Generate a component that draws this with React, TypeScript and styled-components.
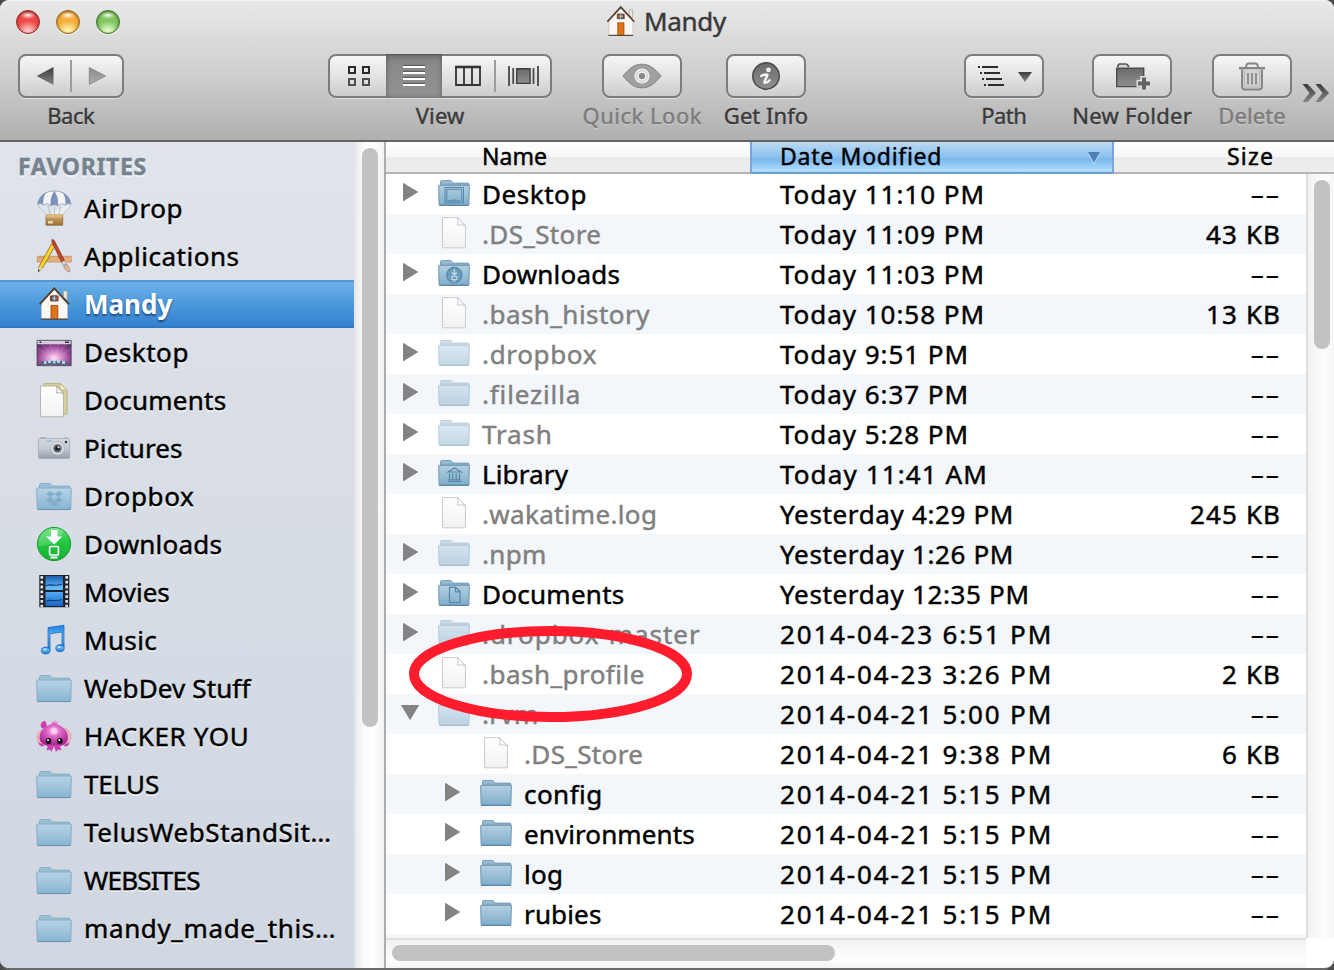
import React from 'react';
import styled, { createGlobalStyle, css } from 'styled-components';

const GlobalStyle = createGlobalStyle`
  * { box-sizing: border-box; }
  body {
    margin: 0;
    background: #4b4a4c;
    font-family: "Noto Sans", "Open Sans", sans-serif;
    color: #000;
    overflow: hidden;
  }
  svg { display: block; flex: none; }
`;

/* ---------- window ---------- */

const Window = styled.div`
  position: relative;
  display: flex;
  flex-direction: column;
  width: 1334px;
  height: 970px;
  border-radius: 9px 9px 10px 10px;
  border-bottom: 2px solid #6b696b;
  overflow: hidden;
  background: #fff;
`;

const Text = styled.span<{ $track?: number }>`
  letter-spacing: ${(p) => p.$track ?? 0}px;
  margin-right: ${(p) => -(p.$track ?? 0)}px;
  white-space: pre;
  -webkit-text-stroke: 0.45px currentColor;
`;

/* ---------- toolbar ---------- */

const Header = styled.header`
  flex: none;
  height: 142px;
  border-top: 1px solid #f4f4f4;
  border-bottom: 2px solid #656264;
  background: linear-gradient(#e8e8e8, #cfcfcf 52%, #b0b0b0);
`;

const TitleBar = styled.div`
  display: grid;
  grid-template-columns: 604px auto 1fr;
  align-items: center;
  height: 43px;
`;

const Lights = styled.div`
  display: flex;
  gap: 16px;
  padding: 0 0 1px 16px;
`;

const Light = styled.span<{ $edge: string; $mid: string; $glow: string }>`
  width: 24px;
  height: 24px;
  border-radius: 50%;
  border: 1.5px solid ${(p) => p.$edge};
  background:
    radial-gradient(ellipse 8px 4px at 50% 18%, rgba(255, 255, 255, 0.95), rgba(255, 255, 255, 0) 100%),
    radial-gradient(ellipse 12px 11px at 50% 95%, ${(p) => p.$glow} 20%, transparent 100%),
    ${(p) => p.$mid};
  box-shadow: inset 0 1px 3px ${(p) => p.$edge}, 0 1px 0 rgba(255, 255, 255, 0.5);
`;

const Title = styled.h1`
  display: flex;
  align-items: center;
  gap: 7px;
  margin: 0;
  padding-bottom: 2px;
  font-size: 26px;
  font-weight: 400;
  line-height: 41px;
  color: #383838;
  text-shadow: 0 1px 0 rgba(255, 255, 255, 0.6);
`;

const Tools = styled.div`
  display: flex;
  align-items: flex-start;
  padding: 10px 0 0 18px;
`;

const Tool = styled.div<{ $width: number; $gap: number; $disabled?: boolean }>`
  display: flex;
  flex: none;
  flex-direction: column;
  align-items: center;
  width: ${(p) => p.$width}px;
  margin-right: ${(p) => p.$gap}px;
  font-size: 22px;
  line-height: 35px;
  color: ${(p) => (p.$disabled ? '#7c7c7c' : '#3a3a3a')};
  text-shadow: 0 1px 0 rgba(255, 255, 255, 0.5);
`;

const ButtonFrame = styled.div`
  display: flex;
  width: 100%;
  height: 44px;
  border: 2px solid #7d7d7d;
  border-radius: 8px;
  background: linear-gradient(#f6f6f6, #e3e3e3 50%, #cdcdcd);
  box-shadow: 0 1px 0 rgba(255, 255, 255, 0.45);
`;

const Segment = styled.div<{ $width?: number; $active?: boolean }>`
  display: flex;
  flex: ${(p) => (p.$width ? `0 0 ${p.$width}px` : '1')};
  align-items: center;
  justify-content: center;
  ${(p) =>
    p.$active &&
    css`
      margin: -2px 0;
      background: linear-gradient(#787878, #888 20%, #939393);
      box-shadow: inset 0 0 5px rgba(0, 0, 0, 0.35), inset 0 1px 0 #666;
    `}
`;

const Divider = styled.i`
  flex: none;
  width: 2px;
  margin: 4px 0;
  background: #9c9c9c;
`;

const More = styled.div`
  padding-top: 29px;
`;

/* ---------- body ---------- */

const Body = styled.div`
  display: flex;
  flex: 1;
  min-height: 0;
`;

const Sidebar = styled.nav`
  flex: none;
  width: 356px;
  border-right: 2px solid #e3e5ea;
  background: linear-gradient(#e0e4eb, #d9dee6 35%, #d0d7e1);
`;

const SidebarHeading = styled.h2`
  margin: 0;
  padding: 4px 0 0 18px;
  height: 42px;
  font-size: 23px;
  font-weight: 700;
  line-height: 40px;
  color: #76838f;
  text-shadow: 0 2px 0 rgba(255, 255, 255, 0.65);
`;

const SidebarItem = styled.div<{ $selected?: boolean }>`
  display: flex;
  align-items: center;
  gap: 12px;
  height: 48px;
  padding-left: 36px;
  font-size: 26px;
  line-height: 48px;
  text-shadow: 0 2px 0 rgba(255, 255, 255, 0.6);
  ${(p) =>
    p.$selected &&
    css`
      background: linear-gradient(#5497d2 2px, #6cb2e7 2px, #4c98db 50%, #3380cf);
      box-shadow: inset 0 -2px 0 #2f79c6;
      color: #fff;
      font-weight: 700;
      line-height: 47px;
      text-shadow: 0 2px 2px rgba(20, 50, 100, 0.7);
      ${Text} {
        -webkit-text-stroke: 0;
      }
    `}
`;

const SidebarScroll = styled.div`
  flex: none;
  display: flex;
  justify-content: center;
  width: 30px;
  padding-top: 6px;
  border-right: 2px solid #adadad;
  background: linear-gradient(90deg, #ececec, #fbfbfb 30%, #fff 60%, #f3f3f3);
`;

const Thumb = styled.div<{ $w: number; $h: number }>`
  flex: none;
  width: ${(p) => p.$w}px;
  height: ${(p) => p.$h}px;
  border-radius: 8px;
  background: #c2c2c2;
`;

const List = styled.main`
  display: flex;
  flex: 1;
  flex-direction: column;
  min-width: 0;
`;

const ColumnHeads = styled.div`
  display: grid;
  grid-template-columns: 364px 364px 1fr;
  flex: none;
  height: 32px;
  border-bottom: 2px solid #b4b4b4;
  background: linear-gradient(#fff, #f8f8f8 48%, #ebebeb 52%, #ededed);
  font-size: 23px;
  line-height: 28px;
`;

const Head = styled.div<{ $kind: 'name' | 'date' | 'size' }>`
  display: flex;
  align-items: flex-start;
  ${(p) => p.$kind === 'name' && css`padding-left: 96px;`}
  ${(p) =>
    p.$kind === 'date' &&
    css`
      justify-content: space-between;
      height: 32px;
      padding: 0 11px 0 28px;
      border: solid #7ba3dc;
      border-width: 0 2px;
      background: linear-gradient(#bcdaf2, #8dc1ef 46%, #7ab7ee 54%, #b5e1fb 92%, #6a9cce 93%);
    `}
  ${(p) => p.$kind === 'size' && css`justify-content: flex-end; padding-right: 61px;`}
`;

const SortMark = styled.svg`
  margin-top: 9px;
`;

const ListBody = styled.div`
  display: flex;
  flex: 1;
  min-height: 0;
`;

const Rows = styled.div`
  flex: 1;
  height: 764px;
  overflow: hidden;
  background: #f3f6fa;
`;

const Row = styled.div<{ $striped: boolean }>`
  display: grid;
  grid-template-columns: 394px 1fr 140px;
  height: 40px;
  background: ${(p) => (p.$striped ? '#f3f6fa' : '#fff')};
  font-size: 26px;
  line-height: 40px;
`;

const NameCell = styled.div<{ $nested?: boolean; $hidden?: boolean }>`
  display: grid;
  grid-template-columns: 37px 44px 1fr;
  align-items: start;
  padding-left: ${(p) => (p.$nested ? 57 : 15)}px;
  color: ${(p) => (p.$hidden ? '#808080' : '#000')};
`;

const IconSlot = styled.div`
  height: 40px;
`;

const SizeCell = styled.div`
  display: flex;
  justify-content: flex-end;
  padding-right: 26px;
`;

const Dashes = styled.span`
  display: inline-block;
  letter-spacing: -0.1px;
  transform: scaleX(1.8);
  transform-origin: right center;
`;

const RightScroll = styled.div`
  flex: none;
  display: flex;
  justify-content: center;
  width: 28px;
  height: 764px;
  padding: 6px 0 0 2px;
  border-left: 2px solid #dedede;
  background: linear-gradient(90deg, #f1f1f1, #fdfdfd 60%, #f6f6f6);
`;

const BottomScroll = styled.div`
  flex: none;
  display: flex;
  width: 920px;
  height: 30px;
  padding: 5px 0 0 6px;
  border-top: 2px solid #dfdfdf;
  background: linear-gradient(#f2f2f2, #fdfdfd 70%, #f4f4f4);
`;

const Highlight = styled.svg`
  position: absolute;
  left: 408px;
  top: 625px;
`;

/* ---------- shared gradients ---------- */

const stops = (list: [number, string][]) =>
  list.map(([o, c]) => <stop key={o} offset={o} stopColor={c} />);

const Vertical = ({ id, list }: { id: string; list: [number, string][] }) => (
  <linearGradient id={id} x1="0" y1="0" x2="0" y2="1">{stops(list)}</linearGradient>
);

const Gradients = () => (
  <svg width="0" height="0">
    <defs>
      <Vertical id="folder" list={[[0, '#b4d0e2'], [1, '#7dadcb']]} />
      <Vertical id="folderBack" list={[[0, '#a3c4d9'], [1, '#6f9fbe']]} />
      <Vertical id="sideFolder" list={[[0, '#b9d3e4'], [1, '#86b4d3']]} />
      <Vertical id="paper" list={[[0, '#ffffff'], [1, '#f2f2f2']]} />
      <Vertical id="dark" list={[[0, '#3c3c3c'], [1, '#858585']]} />
      <Vertical id="mid" list={[[0, '#8a8a8a'], [1, '#aeaeae']]} />
      <Vertical id="info" list={[[0, '#6b6b6b'], [1, '#8f8f8f']]} />
      <Vertical id="camera" list={[[0, '#d5dae0'], [0.5, '#c3cad2'], [1, '#939ca8']]} />
      <Vertical id="green" list={[[0, '#5fdd72'], [0.5, '#1fc53d'], [1, '#17b235']]} />
      <Vertical id="music" list={[[0, '#1b7fe0'], [0.4, '#5cb4f6'], [1, '#2477d8']]} />
      <Vertical id="film" list={[[0, '#1e5cae'], [0.4, '#65bdff'], [1, '#1767c4']]} />
      <Vertical id="box" list={[[0, '#d5ab6e'], [1, '#9e733c']]} />
      <radialGradient id="aurora" cx="0.5" cy="0.7" r="0.8">
        {stops([[0, '#fdeefa'], [0.25, '#dd95ce'], [0.6, '#8f4590'], [1, '#33244c']])}
      </radialGradient>
      <radialGradient id="squid" cx="0.5" cy="0.35" r="0.6">
        {stops([[0, '#fbc3ee'], [0.4, '#de66c6'], [1, '#a82897']])}
      </radialGradient>
    </defs>
  </svg>
);

/* ---------- toolbar icons ---------- */

const House = ({ size = 36 }: { size?: number }) => (
  <svg width={size} height={size} viewBox="0 0 36 36">
    <path d="M27.5 5h3.6v9l-3.6-3z" fill="#efe9df" stroke="#a89f92" strokeWidth=".7" />
    <path d="M5.5 17 18.3 3 31.5 17v15.8h-26z" fill="#fbf8f3" stroke="#c9c0b3" strokeWidth=".7" />
    <path d="M3.6 18.3 18.3 2.3 33 18.3" fill="none" stroke="#54402f" strokeWidth="1.9" />
    <path d="M4.8 33.2h27" stroke="#574a3f" strokeWidth="1.3" />
    <path d="M14 9.6h2v5.6h-2zM20.6 9.6h2v5.6h-2z" fill="#a03a22" />
    <path d="M16 9.6h4.6v5.6H16z" fill="#5b6774" stroke="#483c34" strokeWidth=".6" />
    <path d="M18.3 9.6v5.6M16 12.3h4.6" stroke="#dfe4e8" strokeWidth=".7" />
    <path d="M15 19.4h6.8v13.2H15z" fill="#e07318" stroke="#8c4512" strokeWidth=".8" />
  </svg>
);

const BackIcon = () => (
  <svg width="18" height="20" viewBox="0 0 18 20"><path d="M.6 10 17.5 1v18z" fill="url(#dark)" /></svg>
);
const ForwardIcon = () => (
  <svg width="18" height="20" viewBox="0 0 18 20"><path d="M17.4 10 1.3 1.6v16.8z" fill="url(#mid)" stroke="#858585" strokeWidth=".9" /></svg>
);
const GridIcon = () => (
  <svg width="24" height="22" viewBox="0 0 24 22" fill="none" strokeWidth="2">
    <path d="M3 2h6v6H3zM17 2h6v6h-6z" stroke="#2c2c2c" />
    <path d="M3 14h6v6H3zM17 14h6v6h-6z" stroke="#4e4e4e" />
  </svg>
);
const ListIcon = () => (
  <svg width="22" height="24" viewBox="0 0 22 24">
    <path d="M0 1.8h22M0 7.8h22M0 13.8h22M0 19.8h22" stroke="#5f5f5f" strokeWidth="2" />
    <path d="M0 3h22M0 9h22M0 15h22M0 21h22" stroke="#fff" strokeWidth="2" />
  </svg>
);
const ColumnsIcon = () => (
  <svg width="26" height="22" viewBox="0 0 26 22" fill="none" stroke="#333">
    <path d="M1 1.5v18.5h24V1.5M9 2v17M17 2v17" strokeWidth="1.8" />
    <path d="M0 2h26" strokeWidth="2.6" />
  </svg>
);
const FlowIcon = () => (
  <svg width="31" height="22" viewBox="0 0 31 22">
    <path d="M1 1v20M30 1v20" stroke="#4a4a4a" strokeWidth="1.8" />
    <path d="M5.2 3v16M25.500 3v16" stroke="#4a4a4a" strokeWidth="1.8" />
    <path d="M8.700 3.800h13.400v14.600H8.700z" fill="url(#info)" stroke="#3e3e3e" strokeWidth="1.4" />
  </svg>
);
const EyeIcon = () => (
  <svg width="40" height="26" viewBox="0 0 40 26">
    <path d="M1 13C8 4.600 13 1.200 20 1.200S32 4.600 39 13C32 21.400 27 24.800 20 24.800S8 21.400 1 13z" fill="#9f9f9f" stroke="#808080" />
    <circle cx="20" cy="13" r="7.600" fill="#ececec" />
    <circle cx="20" cy="13" r="5.400" fill="none" stroke="#c9c9c9" strokeWidth="1" />
    <circle cx="20" cy="13" r="3.100" fill="#868686" />
  </svg>
);
const InfoIcon = () => (
  <svg width="28" height="28" viewBox="0 0 28 28">
    <circle cx="14" cy="14" r="13.200" fill="url(#info)" stroke="#484848" strokeWidth="1.500" />
    <circle cx="16.500" cy="7.800" r="2.400" fill="#f2f2f2" />
    <path d="M9.300 14c2.200-1.400 4.300-1.800 6.200-1.400-.5 2.400-3.300 5.500-3 8 1.800.7 3.600-.5 5-2.300" fill="none" stroke="#f2f2f2" strokeWidth="2.500" strokeLinejoin="round" strokeLinecap="round" />
  </svg>
);
const PathIcon = () => (
  <svg width="56" height="24" viewBox="0 0 56 24">
    <g stroke="#2c2c2c" strokeWidth="2">
      <path d="M2 3h2M6 3h16M4 9h2M8 9h16M6 15h2M10 15h16M8 21h2M12 21h16" />
    </g>
    <path d="M42 8h14l-7 10z" fill="url(#dark)" />
  </svg>
);
const NewFolderIcon = () => (
  <svg width="36" height="28" viewBox="0 0 36 28">
    <path d="M4 5V3.800C4 2.500 5 2 6 2h5.500c1.400 0 2.300.7 2.800 1.800L14.700 5" fill="#d7d7d7" stroke="#555" strokeWidth="1.700" />
    <path d="M2.700 6.200h27v18.400h-27z" fill="url(#info)" stroke="#4c4c4c" strokeWidth="1.400" />
    <path d="M30 14v14M22.500 21.500H36" stroke="#dedede" strokeWidth="7.500" />
    <path d="M30 15.500v12M24 21.500h12" stroke="#626262" strokeWidth="4" />
  </svg>
);
const TrashIcon = () => (
  <svg width="26" height="29" viewBox="0 0 26 29" fill="none" stroke="#858585">
    <path d="M7 5.500C7 3 8 1.500 10 1.500h6c2 0 3 1.500 3 4" strokeWidth="1.900" />
    <path d="M0 6.200h26" strokeWidth="2.400" />
    <path d="M3 7.500v17c0 2 1 3 3 3h14c2 0 3-1 3-3v-17" strokeWidth="1.900" fill="#d3d3d3" />
    <path d="M5.300 8v15c0 1.500.6 2 2 2h11.400c1.400 0 2-.5 2-2V8" stroke="#b5b5b5" strokeWidth="1" />
    <path d="M9 11v11.500M13 11v11.500M17 11v11.500" strokeWidth="1.700" />
  </svg>
);
const MoreIcon = () => (
  <svg width="28" height="20" viewBox="0 0 28 20">
    <path d="M.5 1H5.500l8.500 9-8.500 9H.5l7-9zM13.500 1h5l8.500 9-8.500 9h-5l7-9z" fill="url(#dark)" />
  </svg>
);

/* ---------- file icons ---------- */

type Badge = 'desktop' | 'downloads' | 'library' | 'documents' | undefined;

const badges: Record<string, React.ReactNode> = {
  desktop: <path d="M7 7.500h18.500v15.300H7zM8.800 9.300h14.900v11.700H8.800zM12 21.500l1-1.400h6.500l1 1.400" strokeWidth="1" />,
  downloads: (
    <>
      <circle cx="16.300" cy="15" r="7.600" fill="#6d9cbb" />
      <path d="M16.300 9v5.500M13.800 12.500l2.500 2.500 2.500-2.500" stroke="#b9d6e8" strokeWidth="1.600" />
      <path d="M13.800 16.500h5v3h-5zM14.800 21.200h3" stroke="#b9d6e8" />
    </>
  ),
  library: <path d="M10 12h13l-6.500-4zM11.500 13.500v6M14.800 13.500v6M18.200 13.500v6M21.500 13.500v6M9.500 21.500h14M10.500 19.800h12" />,
  documents: <path d="M11.500 7.300h6.300l4.200 4.300v10.900H11.500zM17.500 7.500v4.300h4.300" />,
};

const Folder = ({ badge, faded }: { badge?: Badge; faded?: boolean }) => (
  <svg width="32" height="38" viewBox="0 -6 32 38" opacity={faded ? 0.48 : 1}>
    <path d="M2.500 4.500V1.700C2.500.9 3 .5 3.700.5h8.600c.8 0 1.200.4 1.500 1l.7 1.600h15.300c.8 0 1.200.4 1.200 1.100V8h-28.500z" fill="url(#folderBack)" stroke="#6e96b0" strokeWidth=".9" />
    <path d="M.6 6.200c0-.6.300-.9.900-.9h29c.6 0 .9.300.9.900l-.5 18.300c0 .6-.4 1-1 1H2.100c-.6 0-1-.4-1-1z" fill="url(#folder)" stroke="#6690ad" strokeWidth=".9" />
    <path d="M1.500 25.200h29" stroke="#557f9b" strokeWidth="1" />
    <g fill="none" stroke="#5586a8" strokeWidth="1.200">{badge && badges[badge]}</g>
  </svg>
);

const Doc = () => (
  <svg width="32" height="38" viewBox="0 0 32 38">
    <path d="M4.500 3.600h15l8 8.400v21.800h-23z" fill="url(#paper)" stroke="#cbcbcb" strokeWidth="1" />
    <path d="M19.500 3.600c.7 2.500.5 5-.1 7.400 2.800-.4 5.600-.2 8.100 1z" fill="#fff" stroke="#bfbfbf" strokeWidth=".9" />
  </svg>
);

const ClosedArrow = () => (
  <svg width="22" height="38" viewBox="0 0 22 38"><path d="M2 8.800v18.600L17.300 18z" fill="#838383" /></svg>
);
const OpenArrow = () => (
  <svg width="22" height="38" viewBox="0 0 22 38"><path d="M0 11h18.200L9.100 26.200z" fill="#838383" /></svg>
);

/* ---------- sidebar icons ---------- */

const SideFolder = ({ children }: { children?: React.ReactNode }) => (
  <svg width="36" height="36" viewBox="0 0 36 36">
    <path d="M3.500 9.500V7c0-.8.500-1.400 1.300-1.400h8.700c.8 0 1.300.3 1.600 1l.6 1.500h17c.8 0 1.300.5 1.300 1.300V12h-30.500z" fill="#9cc0d9" stroke="#84a9c2" strokeWidth=".9" />
    <path d="M.7 11c0-.7.400-1 1-1h32.600c.6 0 1 .3 1 1L34.800 30.500c0 .7-.5 1.100-1.100 1.100H2.300c-.6 0-1.100-.4-1.100-1.100z" fill="url(#sideFolder)" stroke="#7fa9c5" strokeWidth=".9" />
    <path d="M1.500 31.500h33" stroke="#6c93ad" strokeWidth="1" />
    {children}
  </svg>
);

const sideIcons: Record<string, React.ReactNode> = {
  airdrop: (
    <svg width="36" height="36" viewBox="0 0 36 36">
      <path d="M2.500 14C4 19 8 22 11 25M34.500 14C33 19 29 22 26 25L11 25z" fill="#eceef2" />
      <path d="M2.500 15C4 19 8 22 11 25M12 16l2.500 9M18.500 17v8M25 16l-2.500 9M34.500 15C33 19 29 22 26 25" stroke="#b4b9c0" strokeWidth=".8" fill="none" />
      <path d="M1.700 14.500C2.500 6 9.500 1 18.300 1S34.200 6 35 14.500c-1.500-1.300-3.800-1.500-5.600.8-2.500-2-5.500-2-7.300.7-2.300-1.600-5-1.600-7.500 0-2-2.700-4.800-2.700-7.300-.7-1.800-2.300-4.100-2.100-5.600-.8z" fill="#f3f5f8" stroke="#8d99ac" strokeWidth=".8" />
      <path d="M1.700 14.500C2.300 9 5.500 4.500 10.500 2.500 7.500 5.500 7 10 7.300 15.300c-1.800-2.300-4.100-2.100-5.600-.8zM35 14.500C34.400 9 31.200 4.500 26.200 2.500c3 3 3.500 7.500 3.200 12.800 1.800-2.300 4.100-2.100 5.600-.8zM14.600 16c-.5-6 1-11.500 3.700-15 2.700 3.500 4.300 9 3.800 15-2.300-1.600-5-1.600-7.500 0z" fill="#7e93bb" />
      <path d="M10 25h16.700v10.200H10z" fill="url(#box)" stroke="#825c2d" strokeWidth=".7" />
      <path d="M10 24.500h16.700v3H10z" fill="#deb97f" />
      <path d="M12 31h5v2.500h-5z" fill="#ead7b5" />
    </svg>
  ),
  apps: (
    <svg width="36" height="36" viewBox="0 0 36 36">
      <path d="M1.300 18.300h34v5.700h-34z" fill="#e4b07f" stroke="#c48c58" strokeWidth=".7" />
      <path d="M4 18.500v2M7 18.500v3M10 18.500v2M13 18.500v3M22 18.500v2M25 18.500v3M31 18.500v2" stroke="#b37e4c" strokeWidth=".7" />
      <path d="m15.500 6 3.500 2.200L6.500 30 2.500 33.700 3 28.500z" fill="#f4d333" stroke="#8a6d1c" strokeWidth=".8" />
      <path d="m15.500 6 3.500 2.200 1-2.200c-.8-2-2.600-2.500-3.600-1.500z" fill="#d9606a" />
      <path d="m3 28.500 3.500 1.700-4.200 3.600z" fill="#e9cfa4" /><path d="m2.500 31.500 1.400.8-1.900 1.900z" fill="#222" />
      <path d="m16 1.500 2 .7L28.500 22.500l-3 1.700L16 4z" fill="#c5472a" stroke="#7c2717" strokeWidth=".7" />
      <path d="m25.500 24.200 3-1.700 2 3.700-2.800 1.700z" fill="#d4d4d4" stroke="#8e8e8e" strokeWidth=".6" />
      <path d="m27.700 28 2.800-1.800c2 2.500 3.800 4.800 3 7.600-2.800-.3-4.700-2.600-5.800-5.800z" fill="#e4b9a3" stroke="#a06f5a" strokeWidth=".7" />
    </svg>
  ),
  home: <House />,
  desktop: (
    <svg width="36" height="36" viewBox="0 0 36 36">
      <path d="M1 6.300h34.200v25.400H1z" fill="url(#aurora)" />
      <path d="M18 25 1 14M18 25 6 10M18 25 14 10M18 25 23 10M18 25 30 10M18 25 35 15" stroke="#f3b7e4" strokeWidth="1" opacity=".25" />
      <path d="M1 6.300h34.200v3.900H1z" fill="#d3cfd9" />
      <path d="M3.500 8.200h2M29 8.200h4" stroke="#38313e" strokeWidth="1.400" />
      <path d="M5 27h26l3 4.200H2z" fill="#5a6379" />
      <path d="M8 28.500h2.500M12 27.500h3M17 28h2.500M21 27.500h3M26 28.500h3" stroke="#a9d2f0" strokeWidth="3" />
      <path d="M1 6.300h34.200v25.400H1z" fill="none" stroke="#46374f" strokeWidth=".7" />
    </svg>
  ),
  documents: (
    <svg width="36" height="36" viewBox="0 0 36 36">
      <path d="M8 1.500h16l7 6.500v24H8z" fill="#d9cf98" stroke="#b3a873" strokeWidth=".8" />
      <path d="M24 1.500V8h7z" fill="#f6f0cb" stroke="#b3a873" strokeWidth=".7" />
      <path d="M4.500 4h16l7 7.500v23.200h-23z" fill="url(#paper)" stroke="#a9a9a0" strokeWidth=".8" />
      <path d="M20.500 4c.7 2.500.7 4.500 0 7 2.500-.5 5-.3 7 .5z" fill="#fff" stroke="#999" strokeWidth=".8" />
    </svg>
  ),
  pictures: (
    <svg width="36" height="36" viewBox="0 0 36 36">
      <path d="M4 7.300h6v2H4zM28 7.600h4v2h-4z" fill="#9ca5ae" />
      <rect x="2.400" y="8.500" width="31.300" height="20" rx="1.500" fill="url(#camera)" stroke="#a3abb4" strokeWidth=".8" />
      <path d="M10.500 11h5" stroke="#9eb9d8" strokeWidth="1.700" />
      <circle cx="21.500" cy="18.300" r="6.800" fill="#dfe3e7" stroke="#a3abb4" strokeWidth=".8" />
      <circle cx="21.500" cy="18.300" r="4.400" fill="#6b747e" />
      <circle cx="21.500" cy="18.300" r="2.500" fill="#1b2029" />
      <circle cx="22.500" cy="17.200" r="1" fill="#fff" />
      <circle cx="30" cy="12" r="1.300" fill="#373e46" />
    </svg>
  ),
  folder: <SideFolder />,
  dropbox: (
    <SideFolder>
      <path d="m14 13 4.500 3.200L14 19l-4-3.200zM22.500 13l4.300 2.800-4.300 3.200-4-2.800zM14 19l4.500 3.200-4.500 3-4.200-3.200zM22.500 19l4.300 3-4.300 3.200-4-3zM13.800 26l4.600-3 4.400 3-4.400 2.800z" fill="#82adc9" />
    </SideFolder>
  ),
  downloads: (
    <svg width="36" height="36" viewBox="0 0 36 36">
      <circle cx="18" cy="18" r="16.600" fill="url(#green)" stroke="#159a30" strokeWidth="1" />
      <path d="M2.500 20C13 21 24 14 28 5A16 16 0 0 0 2.500 20z" fill="#fff" opacity=".18" />
      <path d="M15 4h6.500v6.500h4.700l-8 8-8-8H15z" fill="#fff" />
      <rect x="13.600" y="20.500" width="8.800" height="8.500" rx="1" fill="none" stroke="#fff" strokeWidth="1.700" />
      <path d="M14.500 31.500h7" stroke="#fff" strokeWidth="2" />
    </svg>
  ),
  movies: (
    <svg width="36" height="36" viewBox="0 0 36 36">
      <path d="M3.300 1h30v32.300h-30z" fill="#20232a" />
      <path d="M5.800 2v31M30.700 2v31" stroke="#dfe5ec" strokeWidth="2.600" strokeDasharray="2.800 2" />
      <path d="M9.500 2h17.400v14H9.500zM9.500 18h17.400v14H9.500z" fill="url(#film)" />
      <path d="M10 11.500c5-3 7 1 16-2v1.300c-7 2-11 0-16 1.500zM10 27c5-3 7 1 16-2v1.300c-7 2-11 0-16 1.500z" fill="#123e7d" />
    </svg>
  ),
  music: (
    <svg width="36" height="36" viewBox="0 0 36 36">
      <path d="M12 5.500 28 3.300v22.200h-2V10l-12 1.800v16.700H12z" fill="url(#music)" stroke="#1763b8" strokeWidth=".7" />
      <ellipse cx="9.700" cy="28.500" rx="4.300" ry="3.500" fill="url(#music)" stroke="#1763b8" strokeWidth=".7" />
      <ellipse cx="24" cy="26.200" rx="4.200" ry="3.500" fill="url(#music)" stroke="#1763b8" strokeWidth=".7" />
      <ellipse cx="9" cy="27.300" rx="1.800" ry="1.100" fill="#c5e5ff" /><ellipse cx="23.300" cy="25" rx="1.800" ry="1.100" fill="#c5e5ff" />
    </svg>
  ),
  squid: (
    <svg width="36" height="36" viewBox="0 0 36 36">
      <path d="M8 11C2 12-1 19 2.500 24c1 2 3 2.500 5 1.500M28 10c6 1 9 8 5.500 13-1 2-3 3-5 2" fill="#eeb6bd" stroke="#dda0aa" strokeWidth=".8" />
      <path d="M5 9c-1-3 .5-5.500 4-6.300C11 5 10.500 8 11 9c-1.500 2-4.500 2-6 0z" fill="#cf3da9" />
      <path d="M16.500 6 15 2.500l2.500 2L19 2l.7 3L22 3l-1 4z" fill="#e27cc8" />
      <path d="M18 5c7 2 14 7 14 14.500 0 5-3.500 7.500-7.500 8.500h-13C7.500 27 3.500 24.500 3.500 19.500 3.500 12 11 7 18 5z" fill="url(#squid)" />
      <path d="M2 23c1 2.500 3 3 5 2.500L8 28c-3 1.500-5.500-1-6-5zM34 23c-1 2.500-3 3-5 2.500L28 28c3 1.500 5.500-1 6-5zM12 27l-1.500 5.500 3.500-1L15.500 34l2.500-6 2 6 2-2.500 3.500 1L23.500 27z" fill="#cd3fae" />
      <circle cx="12.500" cy="23" r="2.900" fill="#151016" /><circle cx="23.800" cy="23" r="2.900" fill="#151016" />
      <circle cx="12" cy="22" r="1" fill="#fff" /><circle cx="23.300" cy="22" r="1" fill="#fff" />
      <circle cx="18" cy="13" r="3.500" fill="#fff" opacity=".4" />
    </svg>
  ),
};

/* ---------- data ---------- */

const favorites: { icon: string; label: string; track: number; selected?: boolean }[] = [
  { icon: 'airdrop', label: 'AirDrop', track: 0.6 },
  { icon: 'apps', label: 'Applications', track: 0.5 },
  { icon: 'home', label: 'Mandy', track: 0, selected: true },
  { icon: 'desktop', label: 'Desktop', track: 0.55 },
  { icon: 'documents', label: 'Documents', track: 0.25 },
  { icon: 'pictures', label: 'Pictures', track: 0.12 },
  { icon: 'dropbox', label: 'Dropbox', track: 0.65 },
  { icon: 'downloads', label: 'Downloads', track: 0.22 },
  { icon: 'movies', label: 'Movies', track: 0 },
  { icon: 'music', label: 'Music', track: 0.35 },
  { icon: 'folder', label: 'WebDev Stuff', track: 0.12 },
  { icon: 'squid', label: 'HACKER YOU', track: 0.65 },
  { icon: 'folder', label: 'TELUS', track: -0.1 },
  { icon: 'folder', label: 'TelusWebStandSit…', track: 0.56 },
  { icon: 'folder', label: 'WEBSITES', track: -0.75 },
  { icon: 'folder', label: 'mandy_made_this…', track: 0.63 },
];

type Entry = {
  name: string;
  track: number;
  kind: 'folder' | 'file';
  badge?: Badge;
  hidden?: boolean;
  nested?: boolean;
  open?: boolean;
  date: string;
  size?: string;
};

const entries: Entry[] = [
  { name: 'Desktop', track: 0.55, kind: 'folder', badge: 'desktop', date: 'Today 11:10 PM' },
  { name: '.DS_Store', track: 0.36, kind: 'file', hidden: true, date: 'Today 11:09 PM', size: '43 KB' },
  { name: 'Downloads', track: 0.22, kind: 'folder', badge: 'downloads', date: 'Today 11:03 PM' },
  { name: '.bash_history', track: 0.46, kind: 'file', hidden: true, date: 'Today 10:58 PM', size: '13 KB' },
  { name: '.dropbox', track: 0.66, kind: 'folder', hidden: true, date: 'Today 9:51 PM' },
  { name: '.filezilla', track: 0.85, kind: 'folder', hidden: true, date: 'Today 6:37 PM' },
  { name: 'Trash', track: 0.83, kind: 'folder', hidden: true, date: 'Today 5:28 PM' },
  { name: 'Library', track: 0.14, kind: 'folder', badge: 'library', date: 'Today 11:41 AM' },
  { name: '.wakatime.log', track: 0.33, kind: 'file', hidden: true, date: 'Yesterday 4:29 PM', size: '245 KB' },
  { name: '.npm', track: 0.32, kind: 'folder', hidden: true, date: 'Yesterday 1:26 PM' },
  { name: 'Documents', track: 0.27, kind: 'folder', badge: 'documents', date: 'Yesterday 12:35 PM' },
  { name: '.dropbox-master', track: 0.95, kind: 'folder', hidden: true, date: '2014-04-23 6:51 PM' },
  { name: '.bash_profile', track: 0.48, kind: 'file', hidden: true, date: '2014-04-23 3:26 PM', size: '2 KB' },
  { name: '.rvm', track: 0.33, kind: 'folder', hidden: true, open: true, date: '2014-04-21 5:00 PM' },
  { name: '.DS_Store', track: 0.36, kind: 'file', hidden: true, nested: true, date: '2014-04-21 9:38 PM', size: '6 KB' },
  { name: 'config', track: 0.45, kind: 'folder', nested: true, date: '2014-04-21 5:15 PM' },
  { name: 'environments', track: 0.1, kind: 'folder', nested: true, date: '2014-04-21 5:15 PM' },
  { name: 'log', track: 0.3, kind: 'folder', nested: true, date: '2014-04-21 5:15 PM' },
  { name: 'rubies', track: 0.15, kind: 'folder', nested: true, date: '2014-04-21 5:15 PM' },
];

const dateTrack = (date: string) =>
  date.startsWith('2014') ? 1.83 : date.startsWith('Y') ? 0.65 : date.endsWith('AM') ? 1.12 : 0.96;

/* ---------- app ---------- */

export default function App() {
  return (
    <>
      <GlobalStyle />
      <Gradients />
      <Window>
        <Header>
          <TitleBar>
            <Lights>
              <Light $edge="#8d2d2b" $mid="#ee4a47" $glow="#ffc5c3" />
              <Light $edge="#97641d" $mid="#f3ae3e" $glow="#fff3a8" />
              <Light $edge="#42752f" $mid="#80c661" $glow="#e2fbc4" />
            </Lights>
            <Title>
              <House size={33} />
              <Text $track={-0.3}>Mandy</Text>
            </Title>
          </TitleBar>
          <Tools>
            <Tool $width={106} $gap={204}>
              <ButtonFrame>
                <Segment><BackIcon /></Segment>
                <Divider />
                <Segment><ForwardIcon /></Segment>
              </ButtonFrame>
              <Text $track={-0.45}>Back</Text>
            </Tool>
            <Tool $width={224} $gap={50}>
              <ButtonFrame>
                <Segment $width={56}><GridIcon /></Segment>
                <Segment $width={56} $active><ListIcon /></Segment>
                <Segment $width={52}><ColumnsIcon /></Segment>
                <Divider />
                <Segment><FlowIcon /></Segment>
              </ButtonFrame>
              <Text $track={0.2}>View</Text>
            </Tool>
            <Tool $width={80} $gap={44} $disabled>
              <ButtonFrame><Segment><EyeIcon /></Segment></ButtonFrame>
              <Text $track={0.52}>Quick Look</Text>
            </Tool>
            <Tool $width={80} $gap={158}>
              <ButtonFrame><Segment><InfoIcon /></Segment></ButtonFrame>
              <Text $track={0.05}>Get Info</Text>
            </Tool>
            <Tool $width={80} $gap={48}>
              <ButtonFrame><Segment><PathIcon /></Segment></ButtonFrame>
              <Text $track={-0.5}>Path</Text>
            </Tool>
            <Tool $width={80} $gap={40}>
              <ButtonFrame><Segment><NewFolderIcon /></Segment></ButtonFrame>
              <Text $track={0.26}>New Folder</Text>
            </Tool>
            <Tool $width={80} $gap={10} $disabled>
              <ButtonFrame><Segment><TrashIcon /></Segment></ButtonFrame>
              <Text $track={0.1}>Delete</Text>
            </Tool>
            <More><MoreIcon /></More>
          </Tools>
        </Header>

        <Body>
          <Sidebar>
            <SidebarHeading><Text $track={0.65}>FAVORITES</Text></SidebarHeading>
            {favorites.map((f) => (
              <SidebarItem key={f.label} $selected={f.selected}>
                {sideIcons[f.icon]}
                <Text $track={f.track}>{f.label}</Text>
              </SidebarItem>
            ))}
          </Sidebar>
          <SidebarScroll><Thumb $w={16} $h={579} /></SidebarScroll>

          <List>
            <ColumnHeads>
              <Head $kind="name"><Text $track={0}>Name</Text></Head>
              <Head $kind="date">
                <Text $track={0.72}>Date Modified</Text>
                <SortMark width="14" height="14" viewBox="0 0 14 14">
                  <path d="M1 2.500h12L7 13.500z" fill="#cfe9fb" />
                  <path d="M1 1h12L7 12z" fill="#4d7fbd" />
                </SortMark>
              </Head>
              <Head $kind="size"><Text $track={1.2}>Size</Text></Head>
            </ColumnHeads>
            <ListBody>
              <Rows>
                {entries.map((e, i) => (
                  <Row key={i} $striped={i % 2 === 1}>
                    <NameCell $nested={e.nested} $hidden={e.hidden}>
                      <IconSlot>
                        {e.kind === 'folder' && (e.open ? <OpenArrow /> : <ClosedArrow />)}
                      </IconSlot>
                      <IconSlot>
                        {e.kind === 'folder' ? <Folder badge={e.badge} faded={e.hidden} /> : <Doc />}
                      </IconSlot>
                      <Text $track={e.track}>{e.name}</Text>
                    </NameCell>
                    <Text $track={dateTrack(e.date)}>{e.date}</Text>
                    <SizeCell>
                      {e.size ? <Text $track={1.1}>{e.size}</Text> : <Dashes>--</Dashes>}
                    </SizeCell>
                  </Row>
                ))}
              </Rows>
              <RightScroll><Thumb $w={16} $h={169} /></RightScroll>
            </ListBody>
            <BottomScroll><Thumb $w={443} $h={16} /></BottomScroll>
          </List>
        </Body>

        <Highlight width="285" height="98" viewBox="0 0 285 98">
          <ellipse cx="142.500" cy="49" rx="136.500" ry="43" fill="none" stroke="#ff1d2d" strokeWidth="10" />
        </Highlight>
      </Window>
    </>
  );
}
